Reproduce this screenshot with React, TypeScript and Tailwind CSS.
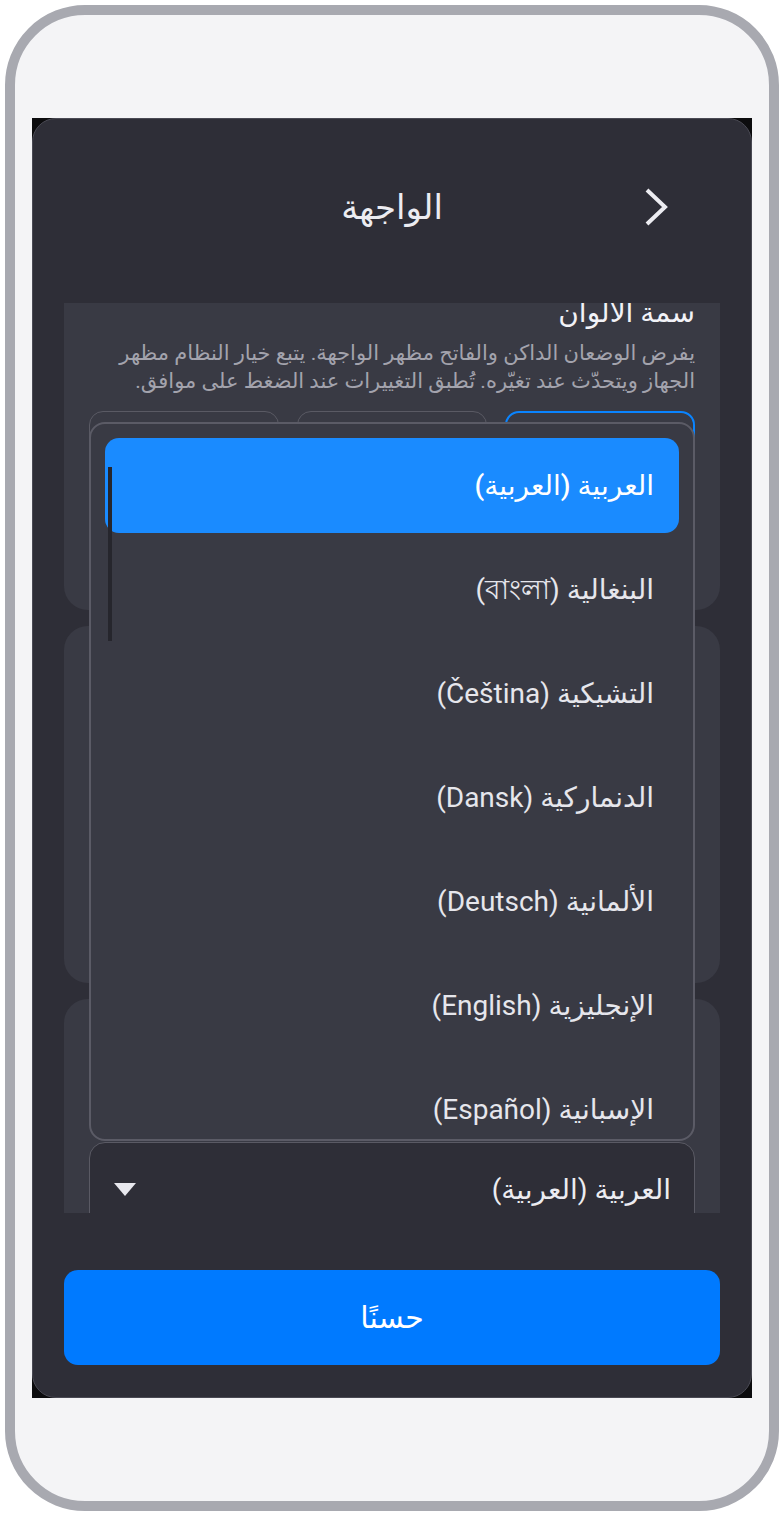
import React from "react";

const languages = [
  "العربية (العربية)",
  "البنغالية (বাংলা)",
  "التشيكية (Čeština)",
  "الدنماركية (Dansk)",
  "الألمانية (Deutsch)",
  "الإنجليزية (English)",
  "الإسبانية (Español)",
];

function Chevron() {
  return (
    <svg width="24" height="40" viewBox="0 0 24 40" fill="none">
      <polyline points="3,3 21,20 3,37" stroke="#ececf1" strokeWidth="4" strokeLinecap="butt" strokeLinejoin="miter" />
    </svg>
  );
}

export default function App() {
  return (
    <div className="w-[784px] h-[1516px] bg-white p-[5px] font-['Roboto','DejaVu_Sans',sans-serif]">
      <div className="w-full h-full rounded-[80px] border-[10px] border-[#a8a9b0] bg-[#f4f4f6] px-[17px] py-[103px]">
        <div className="w-full h-full bg-[#0c0c0e]">
          <div dir="rtl" className="w-full h-full rounded-[24px] border border-[#4a4a54] bg-[#2e2e37] flex flex-col overflow-hidden">
            {/* Header */}
            <div className="h-[184px] shrink-0 pt-[60px]">
              <div className="h-[56px] grid grid-cols-[1fr_auto_1fr] items-center">
                <div className="flex justify-start ps-[83px]">
                  <Chevron />
                </div>
                <h1 className="text-[34px] leading-[44px] text-[#ececf1]">الواجهة</h1>
                <div />
              </div>
            </div>

            {/* Scroll area */}
            <div className="relative h-[910px] shrink-0 overflow-hidden px-[31px]">
              <div className="-mt-[30px] flex flex-col gap-4">
                {/* Card 1: color theme */}
                <section className="rounded-[24px] bg-[#393a44] px-[25px] pt-[24px] pb-[24px]">
                  <h2 className="text-[28px] leading-[32px] text-[#f2f2f7]">سمة الألوان</h2>
                  <p className="mt-[10px] text-[21px] leading-[28px] text-[#a3a3ad]">
                    يفرض الوضعان الداكن والفاتح مظهر الواجهة. يتبع خيار النظام مظهر الجهاز ويتحدّث عند تغيّره. تُطبق التغييرات عند الضغط على موافق.
                  </p>
                  <div className="mt-[16px] grid grid-cols-3 gap-[18px]">
                    <div className="h-[175px] rounded-[14px] border-2 border-[#0a84ff]" />
                    <div className="h-[175px] rounded-[14px] border-[1.5px] border-[#5a5a64]" />
                    <div className="h-[175px] rounded-[14px] border-[1.5px] border-[#5a5a64]" />
                  </div>
                </section>

                {/* Card 2 (covered by the open listbox) */}
                <section className="h-[357px] rounded-[24px] bg-[#393a44]" />

                {/* Card 3: language */}
                <section className="rounded-[24px] bg-[#393a44] px-[25px] pt-[143px] pb-[24px]">
                  <div className="h-[95px] rounded-[16px] border-[1.5px] border-[#5a5a64] bg-[#2e2e37] flex items-center justify-between ps-[23px] pe-[24px]">
                    <span className="text-[28px] text-[#ececf1]">العربية (العربية)</span>
                    <svg width="22" height="13" viewBox="0 0 22 13">
                      <polygon points="0,0 22,0 11,13" fill="#e8e8ee" />
                    </svg>
                  </div>
                </section>
              </div>

              {/* Listbox popup */}
              <div className="absolute left-[56px] top-[119px] w-[606px] h-[719px] rounded-[16px] border-2 border-[#5b5b66] bg-[#393a44] overflow-hidden">
                <div className="p-[14px] flex flex-col gap-[9px]">
                  {languages.map((l, i) => (
                    <div
                      key={l}
                      className={
                        i === 0
                          ? "h-[95px] shrink-0 rounded-[14px] bg-[#1a8bff] flex items-center ps-[25px] text-[28px] font-medium text-white"
                          : "h-[95px] shrink-0 rounded-[14px] flex items-center ps-[25px] text-[28px] text-[#e6e6ec]"
                      }
                    >
                      {l}
                    </div>
                  ))}
                </div>
                <div className="absolute left-[17px] top-[43px] w-[4px] h-[174px] bg-[#26262d]" />
              </div>
            </div>

            {/* Footer */}
            <div className="flex-1 px-[31px] pt-[57px]">
              <button className="w-full h-[95px] rounded-[14px] bg-[#007aff] text-[30px] text-white">حسنًا</button>
            </div>
          </div>
        </div>
      </div>
    </div>
  );
}
